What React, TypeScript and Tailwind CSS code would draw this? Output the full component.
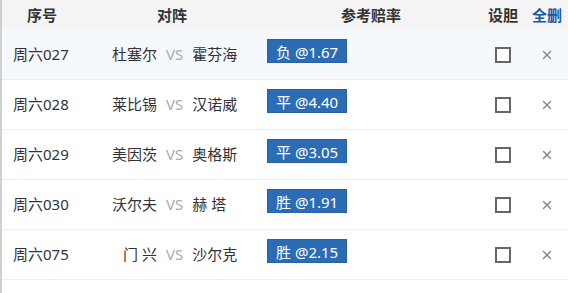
import { X } from 'lucide-react'

export default function App() {
  const rows = [
    { no: '周六027', home: '杜塞尔', away: '霍芬海', pick: '负', odds: '1.67', active: true },
    { no: '周六028', home: '莱比锡', away: '汉诺威', pick: '平', odds: '4.40' },
    { no: '周六029', home: '美因茨', away: '奥格斯', pick: '平', odds: '3.05' },
    { no: '周六030', home: '沃尔夫', away: '赫 塔', pick: '胜', odds: '1.91' },
    { no: '周六075', home: '门 兴', away: '沙尔克', pick: '胜', odds: '2.15' },
  ]

  return (
    <div
      className="w-[568px] h-[293px] bg-white border-l-2 border-[#cfcfcf] text-[15px] text-[#333] overflow-hidden"
      style={{ fontFamily: '"Noto Sans", "Noto Sans CJK SC", sans-serif' }}
    >
      {/* Header */}
      <div className="flex h-[30px] items-center bg-[#f4f4f4] font-bold">
        <div className="w-[80px] text-center">序号</div>
        <div className="w-[180px] text-center">对阵</div>
        <div className="w-[218px] text-center">参考赔率</div>
        <div className="w-[46px] text-center">设胆</div>
        <div className="flex-1 text-center text-[#1a58a6]">全删</div>
      </div>

      {/* Rows */}
      {rows.map((row) => (
        <div
          key={row.no}
          className={`flex h-[50px] items-center border-b border-[#eeeeee] ${row.active ? 'bg-[#f5f8fd]' : 'bg-white'}`}
        >
          <div className="w-[80px] pl-[11px]">{row.no}</div>
          <div className="w-[180px] flex items-center">
            <span className="w-[75px] text-right whitespace-pre">{row.home}</span>
            <span className="ml-[9px] text-[#aaa]">VS</span>
            <span className="ml-[9px] whitespace-pre">{row.away}</span>
          </div>
          <div className="w-[218px] pl-[5px] pb-[7px]">
            <span className="inline-block h-[24px] leading-[24px] px-[8px] bg-[#2c6cb5] border border-[#2862a6] text-white">
              {row.pick} @{row.odds}
            </span>
          </div>
          <div className="w-[46px] flex justify-center">
            <span className="w-[16px] h-[16px] border-2 border-[#666] bg-white" />
          </div>
          <div className="flex-1 flex justify-center">
            <X className="w-[14px] h-[14px] text-[#888]" strokeWidth={2.5} />
          </div>
        </div>
      ))}
    </div>
  )
}
